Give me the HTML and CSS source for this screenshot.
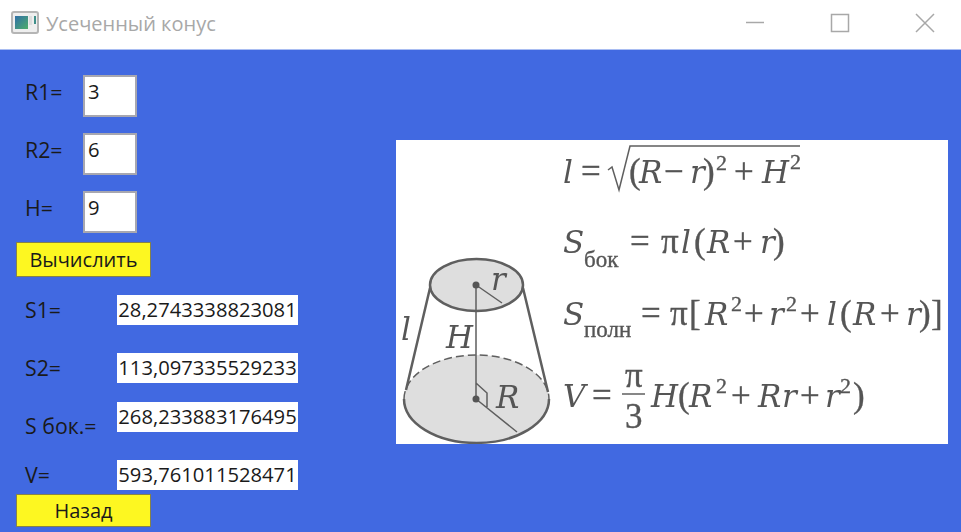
FILE: index.html
```html
<!DOCTYPE html>
<html lang="en">
<head>
    <meta charset="UTF-8">
    <meta name="viewport" content="width=device-width, initial-scale=1.0">
    <title>Усеченный конус</title>
    <link rel="stylesheet" href="styles.css">
</head>
<body>

    <!-- Title bar -->
    <header class="titlebar">
        <svg class="app-icon" width="28" height="24" viewBox="0 0 28 24">
            <defs>
                <linearGradient id="iconFill" x1="0" y1="0" x2="1" y2="1">
                    <stop offset="0" stop-color="#2f6fa8"/>
                    <stop offset="1" stop-color="#4fae6a"/>
                </linearGradient>
            </defs>
            <rect x="1" y="1" width="26" height="21" rx="2" fill="#eee" stroke="#b5b5b5" stroke-width="2"/>
            <rect x="4" y="5" width="13" height="13" fill="url(#iconFill)"/>
            <rect x="18" y="5" width="3" height="9" fill="#ddd"/>
            <rect x="23" y="5" width="2" height="8" fill="#3f8f8a"/>
        </svg>
        <span class="window-title">Усеченный конус</span>
        <div class="window-buttons">
            <svg width="20" height="20" viewBox="0 0 20 20"><path d="M1 9.5H19" class="win-stroke"/></svg>
            <svg width="20" height="20" viewBox="0 0 20 20"><rect x="1.5" y="1.5" width="17" height="17" class="win-stroke"/></svg>
            <svg width="20" height="20" viewBox="0 0 20 20"><path d="M1 1L19 19M19 1L1 19" class="win-stroke"/></svg>
        </div>
    </header>

    <main class="content">
        <section class="form-col">
            <div class="input-row">
                <label class="input-label" for="r1">R1=</label>
                <input class="num-input" type="text" id="r1" value="3">
            </div>
            <div class="input-row">
                <label class="input-label" for="r2">R2=</label>
                <input class="num-input" type="text" id="r2" value="6">
            </div>
            <div class="input-row">
                <label class="input-label" for="h">H=</label>
                <input class="num-input" type="text" id="h" value="9">
            </div>

            <button class="yellow-btn">Вычислить</button>

            <div class="result-row first">
                <span class="result-label">S1=</span>
                <div class="result-box">28,2743338823081</div>
            </div>
            <div class="result-row tight">
                <span class="result-label">S2=</span>
                <div class="result-box">113,097335529233</div>
            </div>
            <div class="result-row">
                <span class="result-label low">S бок.=</span>
                <div class="result-box">268,233883176495</div>
            </div>
            <div class="result-row last">
                <span class="result-label">V=</span>
                <div class="result-box">593,761011528471</div>
            </div>

            <button class="yellow-btn back">Назад</button>
        </section>

        <!-- Truncated cone picture with the formulas -->
        <svg class="figure" width="552" height="304" viewBox="0 0 552 304">
            <rect width="552" height="304" fill="#fff"/>
            <g class="soft">
                <!-- cone -->
                <ellipse cx="80.5" cy="259" rx="72.5" ry="44" fill="#dedede"/>
                <path d="M8 259A72.5 44 0 0 0 153 259" class="line thick"/>
                <path d="M8 259A72.5 44 0 0 1 153 259" class="line dash"/>
                <ellipse cx="80.5" cy="145" rx="46.5" ry="26" fill="#dedede" class="line thick"/>
                <path d="M34 148L10 250M127 148L152 252" class="line thick"/>
                <path d="M80 145V259M80 145L106 163M80 259L121 292M80 243L91 253V267" class="line"/>
                <circle cx="80" cy="145" r="3.5" fill="#555"/>
                <circle cx="80" cy="259" r="3.5" fill="#555"/>
                <text class="m i" x="5" y="200">l</text>
                <text class="m i" x="50" y="208">H</text>
                <text class="m i" x="95" y="150">r</text>
                <text class="m i" x="100" y="268">R</text>

                <!-- l -->
                <text class="m i" x="167" y="43">l</text>
                <text class="m" x="185" y="43">=</text>
                <path d="M212 30L216 27L223 50L234 6H404" class="line"/>
                <text class="m" x="233" y="43">(</text>
                <text class="m i" x="243" y="43">R</text>
                <text class="m" x="268" y="43">−</text>
                <text class="m i" x="294" y="43">r</text>
                <text class="m" x="307" y="43">)</text>
                <text class="sup" x="320" y="30">2</text>
                <text class="m" x="338" y="43">+</text>
                <text class="m i" x="366" y="43">H</text>
                <text class="sup" x="394" y="29">2</text>

                <!-- S side -->
                <text class="m i" x="167" y="113">S</text>
                <text class="sub" x="188" y="127">бок</text>
                <text class="m" x="234" y="113">=</text>
                <text class="m" x="265" y="113">π</text>
                <text class="m i" x="285" y="113">l</text>
                <text class="m" x="298" y="113">(</text>
                <text class="m i" x="311" y="113">R</text>
                <text class="m" x="337" y="113">+</text>
                <text class="m i" x="364" y="113">r</text>
                <text class="m" x="377" y="113">)</text>

                <!-- S full -->
                <text class="m i" x="167" y="185">S</text>
                <text class="sub" x="188" y="197">полн</text>
                <text class="m" x="245" y="185">=</text>
                <text class="m" x="274" y="185">π</text>
                <text class="m" x="293" y="185">[</text>
                <text class="m i" x="309" y="185">R</text>
                <text class="sup" x="335" y="171">2</text>
                <text class="m" x="348" y="185">+</text>
                <text class="m i" x="373" y="185">r</text>
                <text class="sup" x="390" y="171">2</text>
                <text class="m" x="404" y="185">+</text>
                <text class="m i" x="431" y="185">l</text>
                <text class="m" x="444" y="185">(</text>
                <text class="m i" x="457" y="185">R</text>
                <text class="m" x="484" y="185">+</text>
                <text class="m i" x="510" y="185">r</text>
                <text class="m" x="523" y="185">)</text>
                <text class="m" x="535" y="185">]</text>

                <!-- V -->
                <text class="m i" x="167" y="267">V</text>
                <text class="m" x="196" y="267">=</text>
                <text class="m" x="229" y="247">π</text>
                <path d="M226 254H249" class="line"/>
                <text class="m" x="229" y="288">3</text>
                <text class="m i" x="255" y="267">H</text>
                <text class="m" x="282" y="267">(</text>
                <text class="m i" x="293" y="267">R</text>
                <text class="sup" x="320" y="253">2</text>
                <text class="m" x="335" y="267">+</text>
                <text class="m i" x="362" y="267">R</text>
                <text class="m i" x="386" y="267">r</text>
                <text class="m" x="404" y="267">+</text>
                <text class="m i" x="429" y="267">r</text>
                <text class="sup" x="444" y="253">2</text>
                <text class="m" x="457" y="267">)</text>
            </g>
        </svg>
    </main>

</body>
</html>
```

FILE: styles.css
```css
html, body {
    margin: 0;
    height: 100%;
}

body {
    display: flex;
    flex-direction: column;
    height: 532px;
    overflow: hidden;
    font-family: "Open Sans", "Noto Sans", sans-serif;
    font-size: 20.2px;
    color: #1a1a1a;
    background-color: #4169e1;
}

/* Title bar */
.titlebar {
    display: flex;
    flex-shrink: 0;
    align-items: center;
    height: 49px;
    padding-left: 11px;
    background-color: #fff;
    border-bottom: 1px solid #a9bdf2;
}

.app-icon {
    margin-right: 7px;
    margin-top: -3px;
}

.window-title {
    color: #a8a8a8;
    font-size: 20px;
    margin-top: -2px;
}

.window-buttons {
    display: flex;
    gap: 65px;
    margin-left: auto;
    margin-right: 26px;
    margin-top: -3px;
}

.win-stroke {
    fill: none;
    stroke: #a8a8a8;
    stroke-width: 1.5;
}

/* Left column */
.content {
    display: flex;
    flex: 1;
    min-height: 0;
    background-color: #4169e1;
}

.form-col {
    width: 380px;
    padding: 25px 0 0 16px;
    flex-shrink: 0;
}

.input-row {
    display: flex;
    height: 42px;
    margin-bottom: 16px;
}

.input-label {
    width: 58px;
    margin-left: 9px;
    padding-top: 2px;
    font-size: 21.3px;
}

.num-input {
    width: 54px;
    height: 42px;
    box-sizing: border-box;
    padding: 0 0 10px 3px;
    border: 2px solid #a7a7b0;
    border-radius: 0;
    font-family: inherit;
    font-size: 20.2px;
    color: #1a1a1a;
    background-color: #fff;
}

.yellow-btn {
    display: block;
    width: 135px;
    height: 35px;
    margin-top: -7px;
    padding: 0;
    font-family: inherit;
    font-size: 20px;
    color: #1a1a1a;
    background-color: #fdf721;
    border: 1px solid #85824a;
}

.yellow-btn.back {
    height: 33px;
    margin-top: 4px;
}

.result-row {
    display: flex;
    height: 30px;
    margin-bottom: 28px;
}

.result-row.first {
    margin-top: 18px;
}

.result-row.tight {
    margin-bottom: 19px;
}

.result-row.last {
    margin-bottom: 0;
}

.result-label {
    width: 92px;
    margin-left: 9px;
    font-size: 21.3px;
}

.result-label.low {
    padding-top: 9px;
}

.result-box {
    width: 181px;
    height: 30px;
    line-height: 28px;
    text-align: center;
    white-space: nowrap;
    background-color: #fff;
}

/* Picture */
.figure {
    margin-top: 90px;
    flex-shrink: 0;
}

.soft {
    filter: blur(0.4px);
}

.line {
    fill: none;
    stroke: #5f5f5f;
    stroke-width: 1.5;
}

ellipse.line {
    fill: #dedede;
}

.thick {
    stroke-width: 2.5;
}

.dash {
    stroke-dasharray: 8 4;
}

.m, .sup, .sub {
    font-family: "Liberation Serif", serif;
    fill: #555;
    stroke: #555;
    stroke-width: 0.35px;
}

.m {
    font-size: 35px;
}

.i {
    font-family: "DejaVu Serif", "Liberation Serif", serif;
    font-size: 31px;
    font-style: italic;
    stroke-width: 0;
}

.sup {
    font-size: 22px;
}

.sub {
    font-size: 23px;
}
```
